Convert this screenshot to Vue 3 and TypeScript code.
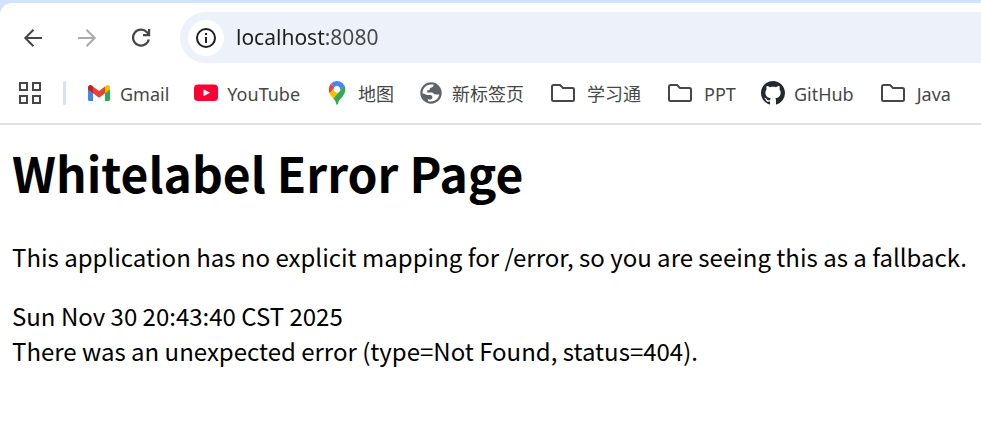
<script setup lang="ts">
import { ref } from 'vue'

type IconName = 'gmail' | 'youtube' | 'maps' | 'globe' | 'folder' | 'github'

interface Bookmark {
  label: string
  icon: IconName
}

const address = ref('localhost:8080')

const bookmarks: Bookmark[] = [
  { label: 'Gmail', icon: 'gmail' },
  { label: 'YouTube', icon: 'youtube' },
  { label: '地图', icon: 'maps' },
  { label: '新标签页', icon: 'globe' },
  { label: '学习通', icon: 'folder' },
  { label: 'PPT', icon: 'folder' },
  { label: 'GitHub', icon: 'github' },
  { label: 'Java', icon: 'folder' },
]
</script>

<template>
  <div class="browser">
    <header class="chrome">
      <div class="toolbar">
        <nav class="nav" aria-label="Navigation">
          <button class="nav-button" type="button" aria-label="Back">
            <svg viewBox="0 0 24 24" width="24" height="24" fill="none" stroke="#474747" stroke-width="2">
              <path d="M21 12H4.500M12.500 3.800L4.300 12l8.200 8.200" />
            </svg>
          </button>
          <button class="nav-button" type="button" aria-label="Forward" disabled>
            <svg viewBox="0 0 24 24" width="24" height="24" fill="none" stroke="#ababab" stroke-width="2">
              <path d="M3 12h16.500M11.500 3.800l8.200 8.200-8.200 8.200" />
            </svg>
          </button>
          <button class="nav-button" type="button" aria-label="Reload">
            <svg viewBox="0 0 24 24" width="24" height="24" fill="none" stroke="#474747" stroke-width="2.200">
              <path d="M19.800 13.500a8 8 0 1 1-1.800-7.200l2 2" />
              <path d="M19 3h2.200v7.200H14V8h5z" fill="#474747" stroke="none" />
            </svg>
          </button>
        </nav>
        <form class="omnibox" @submit.prevent>
          <button class="site-info" type="button" aria-label="Site information">
            <svg viewBox="0 0 22 22" width="22" height="22">
              <circle cx="11" cy="11" r="9" fill="none" stroke="#1f1f1f" stroke-width="2" />
              <path d="M10 10h2v6h-2zM10 6h2v2h-2z" fill="#1f1f1f" />
            </svg>
          </button>
          <input v-model="address" class="address" type="text" aria-label="Address" spellcheck="false" />
        </form>
      </div>

      <nav class="bookmarks" aria-label="Bookmarks">
        <button class="apps" type="button" aria-label="Apps">
          <svg viewBox="0 0 22 22" width="22" height="22" fill="none" stroke="#474747" stroke-width="2">
            <path d="M1 1h7v7H1zM14 1h7v7h-7zM1 14h7v7H1zM14 14h7v7h-7z" />
          </svg>
        </button>
        <span class="divider"></span>
        <a v-for="item in bookmarks" :key="item.label" class="bookmark" href="#">
          <span class="icon" :class="item.icon">
            <svg v-if="item.icon === 'gmail'" viewBox="0 0 24 24" width="24" height="24">
              <path d="M1 7.500V18.500A1.500 1.500 0 0 0 2.500 20H6V11z" fill="#4285f4" />
              <path d="M23 7.500V18.500a1.500 1.500 0 0 1-1.500 1.500H18V11z" fill="#34a853" />
              <path d="M18 5.500L19.200 4.500C20.800 3.300 23 4.400 23 6.300V8.500l-5 3.800z" fill="#fbbc04" />
              <path d="M6 12.300V5.500l6 4.500 6-4.500v6.800l-6 4.500z" fill="#ea4335" />
              <path d="M1 8.500V6.300C1 4.400 3.200 3.300 4.800 4.500L6 5.500v6.800z" fill="#c5221f" />
            </svg>
            <svg v-else-if="item.icon === 'youtube'" viewBox="0 0 24 24" width="24" height="24">
              <rect x="0" y="3.500" width="24" height="16.500" rx="4" fill="#ff0033" />
              <path d="M9.500 8.300l6.500 3.500-6.500 3.500z" fill="#fff" />
            </svg>
            <svg v-else-if="item.icon === 'maps'" viewBox="0 0 24 24" width="24" height="24">
              <path d="M12 0a8.300 8.300 0 0 0-6.400 3l4 3.400L15 .6A8 8 0 0 0 12 0z" fill="#4285f4" />
              <path d="M5.600 3A8 8 0 0 0 3.800 8.300c0 1.600.3 2.900.9 4.100L9.600 6.400z" fill="#ea4335" />
              <path d="M14.600 .5L9.600 6.400a3.200 3.200 0 0 1 4.900 4.100l4.900-5.800A8.300 8.300 0 0 0 14.600.5z" fill="#4285f4" />
              <path d="M12 11.500a3.200 3.200 0 0 1-2.500-5.200L4.700 12.400c.9 2 2.300 3.500 3.800 5.300l6-7.200a3.200 3.200 0 0 1-2.500 1z" fill="#fbbc04" />
              <path d="M19.400 4.600l-10.900 13c1.600 2.100 2.300 3.500 2.700 5.300.2 1.100 1.400 1.100 1.600 0 1.200-5.400 7.500-8 7.500-14.500 0-1.400-.3-2.700-.9-3.800z" fill="#34a853" />
              <circle cx="12" cy="8.300" r="3.100" fill="#fff" />
            </svg>
            <svg v-else-if="item.icon === 'globe'" viewBox="0 0 24 24" width="24" height="24">
              <circle cx="12" cy="12" r="10.700" fill="#5f6368" />
              <path d="M3.600 12.500C3.300 7.500 7 3.600 12 3.500h2.500c.3 1.500-.5 2.700-2 2.900-1.200.2-1.700.8-1.700 1.700 0 .8-.6 1.200-1.500 1.200H8.200v2.200h4.300c2 0 2.300 2 4.300 2h3.500c-.8 4.600-5.300 8.100-11.300 6.700v-1.900c2.600.4 4.400-.3 4.400-1.900 0-1.900-1.200-2.300-3-2.300H8.200c-1.400 0-2-1.600-4.600-1.600z" fill="#fff" />
            </svg>
            <svg v-else-if="item.icon === 'github'" viewBox="0 0 16 16" width="24" height="24">
              <path fill="#24292f" d="M8 0C3.580 0 0 3.580 0 8c0 3.540 2.290 6.530 5.470 7.590.4.070.55-.17.55-.38 0-.19-.01-.82-.01-1.490-2.010.37-2.530-.49-2.690-.94-.09-.23-.48-.94-.82-1.130-.28-.15-.68-.52-.01-.53.63-.01 1.080.58 1.230.82.72 1.210 1.870.87 2.330.66.07-.52.28-.87.51-1.070-1.780-.2-3.640-.89-3.640-3.950 0-.87.31-1.590.82-2.150-.08-.2-.36-1.020.08-2.120 0 0 .67-.21 2.200.82.64-.18 1.320-.27 2-.27s1.360.09 2 .27c1.530-1.040 2.200-.82 2.200-.82.44 1.100.16 1.920.08 2.120.51.56.82 1.270.82 2.150 0 3.070-1.870 3.750-3.650 3.950.29.25.54.73.54 1.480 0 1.070-.01 1.930-.01 2.200 0 .21.15.46.55.38A8.010 8.010 0 0 0 16 8c0-4.420-3.580-8-8-8z" />
            </svg>
            <svg v-else viewBox="0 0 24 24" width="24" height="24" fill="none" stroke="#474747" stroke-width="2">
              <path d="M2.500 4H9l3 3h9.500A1.500 1.500 0 0 1 23 8.500v10a1.500 1.500 0 0 1-1.500 1.500h-19A1.500 1.500 0 0 1 1 18.500v-13A1.500 1.500 0 0 1 2.500 4z" />
            </svg>
          </span>
          <span class="label">{{ item.label }}</span>
        </a>
      </nav>
    </header>

    <main class="page">
      <h1>Whitelabel Error Page</h1>
      <p>This application has no explicit mapping for /error, so you are seeing this as a fallback.</p>
      <div>Sun Nov 30 20:43:40 CST 2025</div>
      <div>There was an unexpected error (type=Not Found, status=404).</div>
    </main>
  </div>
</template>

<style>
body {
  background: #fff;
  overflow: hidden;
}
</style>

<style scoped>
.browser {
  overflow: hidden;
}
.chrome {
  padding-top: 3px;
  background: linear-gradient(#d3e3fd 24px, #fff 24px);
  border-bottom: 2px solid #e1e1e1;
  font-family: "Noto Sans", "Noto Sans CJK SC", sans-serif;
}
.toolbar {
  display: flex;
  align-items: center;
  gap: 27px;
  padding: 9px 0 0 21px;
  background: #fff;
  border-top-left-radius: 12px;
}
.nav {
  display: flex;
  gap: 30px;
}
button {
  padding: 0;
  border: 0;
  background: none;
}
svg {
  display: block;
}
.omnibox {
  display: flex;
  flex: 1;
  align-items: center;
  gap: 12px;
  height: 51px;
  padding-left: 8px;
  border-radius: 26px 0 0 26px;
  background: #ecf1fa;
}
.site-info {
  display: grid;
  place-items: center;
  width: 36px;
  height: 36px;
  border-radius: 18px;
  background: #fff;
}
.address {
  flex: 1;
  min-width: 0;
  padding: 0 0 2px;
  border: 0;
  outline: 0;
  font: 21px "Noto Sans", "Noto Sans CJK SC", sans-serif;
  color: transparent;
  caret-color: #1f1f1f;
  background: linear-gradient(90deg, #1f1f1f 88px, #474747 88px);
  background-clip: text;
}
.bookmarks {
  display: flex;
  align-items: center;
  gap: 25px;
  height: 60px;
  padding-left: 19px;
  background: #fff;
  white-space: nowrap;
}
.divider {
  width: 3px;
  height: 24px;
  margin: 0 -4px 0 -3px;
  border-radius: 2px;
  background: #d3e3fd;
}
.bookmark {
  display: flex;
  align-items: center;
  gap: 9px;
  color: #474747;
  font-size: 18px;
  line-height: 24px;
  text-decoration: none;
}
.icon.folder {
  padding: 0 3px 0 2px;
}
.label {
  padding-top: 2px;
}
.page {
  padding: 12px;
  font: 24px/35px "Noto Sans CJK SC", sans-serif;
  color: #000;
}
h1 {
  margin: 0 0 32px;
  font-size: 48px;
  line-height: 70px;
}
p {
  margin: 0 0 24px;
}
</style>
